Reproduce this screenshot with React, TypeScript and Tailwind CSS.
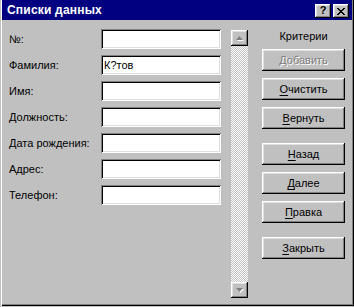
import React from "react";

const fields = [
  { label: "№:", value: "" },
  { label: "Фамилия:", value: "К?тов" },
  { label: "Имя:", value: "" },
  { label: "Должность:", value: "" },
  { label: "Дата рождения:", value: "" },
  { label: "Адрес:", value: "" },
  { label: "Телефон:", value: "" },
];

const raised =
  "shadow-[inset_-1px_-1px_#000,inset_1px_1px_#fff,inset_-2px_-2px_#808080,inset_2px_2px_#dfdfdf]";
const sunken =
  "shadow-[inset_1px_1px_#808080,inset_-1px_-1px_#fff,inset_2px_2px_#000,inset_-2px_-2px_#dfdfdf]";

function Btn({ text, disabled }: { text: string; disabled?: boolean }) {
  return (
    <div
      className={`h-[22px] w-[83px] bg-[#c0c0c0] flex items-center justify-center ${raised}`}
    >
      {disabled ? (
        <span className="text-[#808080] [text-shadow:1px_1px_#fff]">{text}</span>
      ) : (
        <span className="text-black">
          <span className="underline underline-offset-[2px]">{text[0]}</span>
          {text.slice(1)}
        </span>
      )}
    </div>
  );
}

export default function App() {
  return (
    <div className="w-[354px] h-[307px] bg-[#c0c0c0] font-['Liberation_Sans',Arial,sans-serif] text-[11px] text-black overflow-hidden">
      <div className="ml-[1px] w-[353px] h-[306px] shadow-[inset_1px_0_#fff,inset_-1px_-1px_#000,inset_-2px_-2px_#808080] flex flex-col">
        {/* TITLE */}
        <div className="ml-[1px] mr-[2px] h-[20px] bg-[#000080] flex items-center justify-between pl-[5px] pr-[3px]">
          <span className="text-white font-bold text-[12px] tracking-[0.2px]">
            Списки данных
          </span>
          <div className="flex items-center gap-[2px] pt-[2px]">
            <div className={`w-[16px] h-[14px] bg-[#c0c0c0] flex items-center justify-center ${raised}`}>
              <span className="font-bold text-[11px] leading-none -mt-[1px]">?</span>
            </div>
            <div className={`w-[16px] h-[14px] bg-[#c0c0c0] flex items-center justify-center ${raised}`}>
              <svg width="8" height="7" viewBox="0 0 8 7">
                <path d="M0 0h2v1h-2zM6 0h2v1h-2zM1 1h2v1h-2zM5 1h2v1h-2zM2 2h4v1h-4zM3 3h2v1h-2zM2 4h4v1h-4zM1 5h2v1h-2zM5 5h2v1h-2zM0 6h2v1h-2zM6 6h2v1h-2z" fill="#000" />
              </svg>
            </div>
          </div>
        </div>

        {/* BODY */}
        <div className="flex items-start pl-[8px]">
          <div className="mt-[9px] grid grid-cols-[92px_120px] gap-y-[6px]">
            {fields.map((f) => (
              <React.Fragment key={f.label}>
                <div className="h-[20px] flex items-center whitespace-pre">{f.label}</div>
                <div className={`h-[20px] bg-white flex items-center pl-[3px] ${sunken}`}>
                  {f.value}
                </div>
              </React.Fragment>
            ))}
          </div>

          {/* SCROLLBAR */}
          <div className="ml-[10px] mt-[10px] w-[17px] h-[268px] flex flex-col [background:repeating-conic-gradient(#fff_0%_25%,#c0c0c0_0%_50%)_0_0/2px_2px]">
            <div className={`h-[16px] bg-[#c0c0c0] flex items-center justify-center ${raised}`}>
              <svg width="8" height="5" viewBox="0 0 8 5">
                <polygon points="4.5,1 8,5 1,5" fill="#fff" />
                <polygon points="3.5,0 7,4 0,4" fill="#808080" />
              </svg>
            </div>
            <div className="flex-1" />
            <div className={`h-[16px] bg-[#c0c0c0] flex items-center justify-center ${raised}`}>
              <svg width="8" height="5" viewBox="0 0 8 5">
                <polygon points="1,1 8,1 4.5,5" fill="#fff" />
                <polygon points="0,0 7,0 3.5,4" fill="#808080" />
              </svg>
            </div>
          </div>

          {/* RIGHT */}
          <div className="ml-[14px] mt-[10px] flex flex-col">
            <div className="h-[13px] text-center w-[83px] mb-[6px] leading-[13px]">Критерии</div>
            <div className="flex flex-col gap-[7px]">
              <Btn text="Добавить" disabled />
              <Btn text="Очистить" />
              <Btn text="Вернуть" />
            </div>
            <div className="flex flex-col gap-[7px] mt-[14px]">
              <Btn text="Назад" />
              <Btn text="Далее" />
              <Btn text="Правка" />
            </div>
            <div className="mt-[14px]">
              <Btn text="Закрыть" />
            </div>
          </div>
        </div>
      </div>
    </div>
  );
}
